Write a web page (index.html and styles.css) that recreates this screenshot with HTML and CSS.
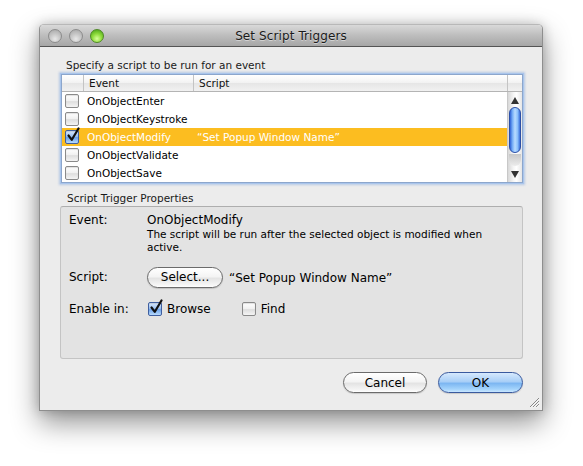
FILE: index.html
```html
<!DOCTYPE html>
<html>
<head>
<meta charset="utf-8">
<link rel="stylesheet" href="styles.css">
</head>
<body>
<div class="window">
  <div class="titlebar">
    <div class="lights">
      <span class="light gray"></span>
      <span class="light gray"></span>
      <span class="light green"></span>
    </div>
    <div class="title">Set Script Triggers</div>
  </div>
  <div class="content">
    <div class="caption">Specify a script to be run for an event</div>
    <div class="table">
      <div class="thead">
        <div class="th c0"></div>
        <div class="th c1">Event</div>
        <div class="th c2">Script</div>
        <div class="th c3"></div>
      </div>
      <div class="tbody">
        <div class="rows">
          <div class="row"><span class="cb"></span><span class="ev">OnObjectEnter</span><span class="sc"></span></div>
          <div class="row"><span class="cb"></span><span class="ev">OnObjectKeystroke</span><span class="sc"></span></div>
          <div class="row sel"><span class="cb checked"><svg class="tick" viewBox="0 0 14 16" width="14" height="16"><path d="M2.5 8.5 L5.8 12.8 L12.5 1.5" fill="none" stroke="#111" stroke-width="2.2" stroke-linecap="round" stroke-linejoin="round"/></svg></span><span class="ev">OnObjectModify</span><span class="sc">“Set Popup Window Name”</span></div>
          <div class="row"><span class="cb"></span><span class="ev">OnObjectValidate</span><span class="sc"></span></div>
          <div class="row"><span class="cb"></span><span class="ev">OnObjectSave</span><span class="sc"></span></div>
        </div>
        <div class="scrollbar">
          <div class="arrow up"><svg viewBox="0 0 8 7" width="8" height="7"><path d="M4 0 L8 7 L0 7 Z" fill="#333"/></svg></div>
          <div class="thumb"></div>
          <div class="track"></div>
          <div class="arrow down"><svg viewBox="0 0 8 7" width="8" height="7"><path d="M0 0 L8 0 L4 7 Z" fill="#333"/></svg></div>
        </div>
      </div>
    </div>
    <div class="caption group-caption">Script Trigger Properties</div>
    <div class="group">
      <div class="prop event-prop">
        <div class="plabel">Event:</div>
        <div class="pvalue">
          <div class="evname">OnObjectModify</div>
          <div class="desc">The script will be run after the selected object is modified when active.</div>
        </div>
      </div>
      <div class="prop script-prop">
        <div class="plabel">Script:</div>
        <div class="pvalue inline">
          <span class="btn select-btn">Select...</span>
          <span class="scriptname">“Set Popup Window Name”</span>
        </div>
      </div>
      <div class="prop enable-prop">
        <div class="plabel">Enable in:</div>
        <div class="pvalue inline">
          <span class="cb checked big"><svg class="tick" viewBox="0 0 14 16" width="14" height="16"><path d="M2.5 8.5 L5.8 12.8 L12.5 1.5" fill="none" stroke="#111" stroke-width="2.2" stroke-linecap="round" stroke-linejoin="round"/></svg></span>
          <span class="cblabel">Browse</span>
          <span class="cb big find-cb"></span>
          <span class="cblabel">Find</span>
        </div>
      </div>
    </div>
    <div class="buttons">
      <span class="btn cancel">Cancel</span>
      <span class="btn ok">OK</span>
    </div>
  </div>
  <svg class="grip" viewBox="0 0 11 11" width="11" height="11">
    <path d="M10 1 L1 10 M10 4 L4 10 M10 7 L7 10" stroke="#888" stroke-width="1"/>
    <path d="M10.7 1.7 L1.7 10.7 M10.7 4.7 L4.7 10.7 M10.7 7.7 L7.7 10.7" stroke="#fff" stroke-width="0.8"/>
  </svg>
</div>
</body>
</html>
```
FILE: styles.css
```css
* { box-sizing: border-box; }
html, body { margin: 0; padding: 0; background: #fff; }
body {
  width: 583px;
  height: 466px;
  padding: 24px 0 0 39px;
  font-family: "DejaVu Sans", "Liberation Sans", sans-serif;
  color: #000;
  overflow: hidden;
}
.window {
  position: relative;
  width: 504px;
  height: 387px;
  background: #ececec;
  border: 1px solid #8e8e8e;
  border-top-color: #b8b8b8;
  border-radius: 5px 5px 0 0;
  box-shadow: 0 12px 28px rgba(0,0,0,0.42), 0 0 12px rgba(0,0,0,0.2);
}
.titlebar {
  position: relative;
  height: 22px;
  background: linear-gradient(#d9d9d9, #bdbdbd 50%, #a6a6a6);
  border-bottom: 1px solid #545454;
  border-radius: 4px 4px 0 0;
  display: flex;
  align-items: center;
  justify-content: center;
}
.lights {
  position: absolute;
  left: 8px;
  top: 4px;
  display: flex;
  gap: 7px;
}
.light {
  width: 14px;
  height: 14px;
  border-radius: 50%;
  display: block;
}
.light.gray {
  background: radial-gradient(circle at 50% 75%, #e8e8e8 0%, #c8c8c8 45%, #a4a4a4 100%);
  border: 1px solid #8c8c8c;
}
.light.green {
  background: radial-gradient(circle at 50% 72%, #d8ff9a 0%, #8fdc3c 45%, #3f9a12 100%);
  border: 1px solid #4f8a25;
}
.title {
  font-size: 12px;
  color: #1a1a1a;
  text-shadow: 0 1px 0 rgba(255,255,255,0.45);
  padding-top: 1px;
  letter-spacing: 0.1px;
}
.content {
  padding: 11px 0 0 20px;
}
.caption {
  font-size: 10.5px;
  line-height: 14px;
  height: 14px;
  padding-left: 6px;
  color: #1a1a1a;
}
.table {
  margin-top: 2px;
  margin-left: 1px;
  width: 462px;
  height: 109px;
  border: 1px solid #8ca6cc;
  box-shadow: 0 0 0 1px #a9c5ec, 0 0 2px 2px rgba(120,160,220,0.45);
  background: #fff;
}
.thead {
  display: flex;
  height: 17px;
  background: linear-gradient(#ffffff, #f2f2f2 50%, #e6e6e6 52%, #f1f1f1);
  border-bottom: 1px solid #b4b4b4;
}
.th {
  font-size: 10.5px;
  line-height: 16px;
  color: #111;
  border-right: 1px solid #c4c4c4;
  padding-left: 5px;
}
.th.c0 { width: 22px; }
.th.c1 { width: 110px; }
.th.c2 { width: 314px; }
.th.c3 { flex: 1; border-right: none; }
.tbody {
  display: flex;
  height: 90px;
}
.rows { flex: 1; }
.row {
  height: 18px;
  display: flex;
  align-items: center;
  font-size: 10.5px;
  color: #000;
}
.row.sel {
  background: #fcbd20;
  color: #fff;
}
.row .cb { margin-left: 3px; }
.ev {
  margin-left: 8px;
  width: 110px;
}
.cb {
  position: relative;
  display: inline-block;
  width: 14px;
  height: 14px;
  border: 1px solid #8a8a8a;
  border-radius: 2px;
  background: linear-gradient(#ffffff, #f0f0f0 50%, #dedede 55%, #f4f4f4);
  box-shadow: inset 0 1px 1px rgba(0,0,0,0.12);
  flex: none;
}
.cb.checked {
  border-color: #3f5fa0;
  background: linear-gradient(#dbe9fc, #9cc2f2 45%, #6ea3ea 55%, #b7dafc);
}
.tick {
  position: absolute;
  left: 0px;
  top: -4px;
}
.scrollbar {
  width: 15px;
  border-left: 1px solid #c8c8c8;
  display: flex;
  flex-direction: column;
  background: linear-gradient(90deg, #d8d8d8, #f6f6f6 40%, #ffffff 60%, #e6e6e6);
}
.arrow {
  display: flex;
  align-items: center;
  justify-content: center;
}
.arrow.up { height: 15px; padding-top: 2px; }
.arrow.down { height: 15px; margin-top: auto; padding-bottom: 1px; }
.thumb {
  margin: 0 1px;
  height: 46px;
  border-radius: 7px;
  border: 1px solid #2b4fa8;
  background: linear-gradient(90deg, #3064d8, #77aef6 25%, #b9dcff 50%, #8dc0fb 75%, #3a70dc);
}
.track {
  height: 12px;
  margin: 1px 1px 0;
  border-radius: 0 0 7px 7px;
  background: linear-gradient(#c8c8c8, #ececec);
}
.group-caption {
  margin-top: 8px;
  padding-left: 7px;
}
.group {
  margin-top: 1px;
  width: 463px;
  height: 153px;
  background: #e3e3e3;
  border: 1px solid #c4c4c4;
  border-top-color: #aeaeae;
  border-radius: 3px;
  padding: 6px 0 0 8px;
}
.prop { display: flex; }
.plabel {
  width: 78px;
  font-size: 12px;
  line-height: 15px;
  flex: none;
}
.pvalue { flex: 1; }
.evname {
  font-size: 12px;
  line-height: 15px;
}
.desc {
  font-size: 10.5px;
  line-height: 13px;
  width: 345px;
}
.script-prop {
  margin-top: 13px;
  align-items: center;
  height: 21px;
}
.inline {
  display: flex;
  align-items: center;
}
.btn {
  display: inline-flex;
  align-items: center;
  justify-content: center;
  height: 21px;
  border-radius: 11px;
  border: 1px solid #6b6b6b;
  font-size: 12px;
  color: #000;
  background: linear-gradient(#ffffff, #f4f4f4 45%, #e4e4e4 55%, #f6f6f6 90%, #ffffff);
  box-shadow: 0 1px 1px rgba(0,0,0,0.15);
}
.select-btn {
  width: 76px;
  padding-bottom: 1px;
}
.scriptname {
  margin-left: 6px;
  font-size: 12px;
}
.enable-prop {
  margin-top: 11px;
  align-items: center;
  height: 20px;
}
.cb.big { width: 14px; height: 14px; margin-left: 1px; }
.cblabel {
  font-size: 12px;
  margin-left: 5px;
}
.cb.big.find-cb { margin-left: 31px; }
.buttons {
  display: flex;
  justify-content: flex-end;
  gap: 11px;
  margin-top: 13px;
  width: 463px;
}
.cancel { width: 84px; }
.ok {
  width: 85px;
  border-color: #3a5a9e;
  background: linear-gradient(#d6e9fd, #a9cff7 45%, #7db7f2 55%, #a4d4fc 85%, #c9e6ff);
}
.grip {
  position: absolute;
  right: 2px;
  bottom: 2px;
}
```
